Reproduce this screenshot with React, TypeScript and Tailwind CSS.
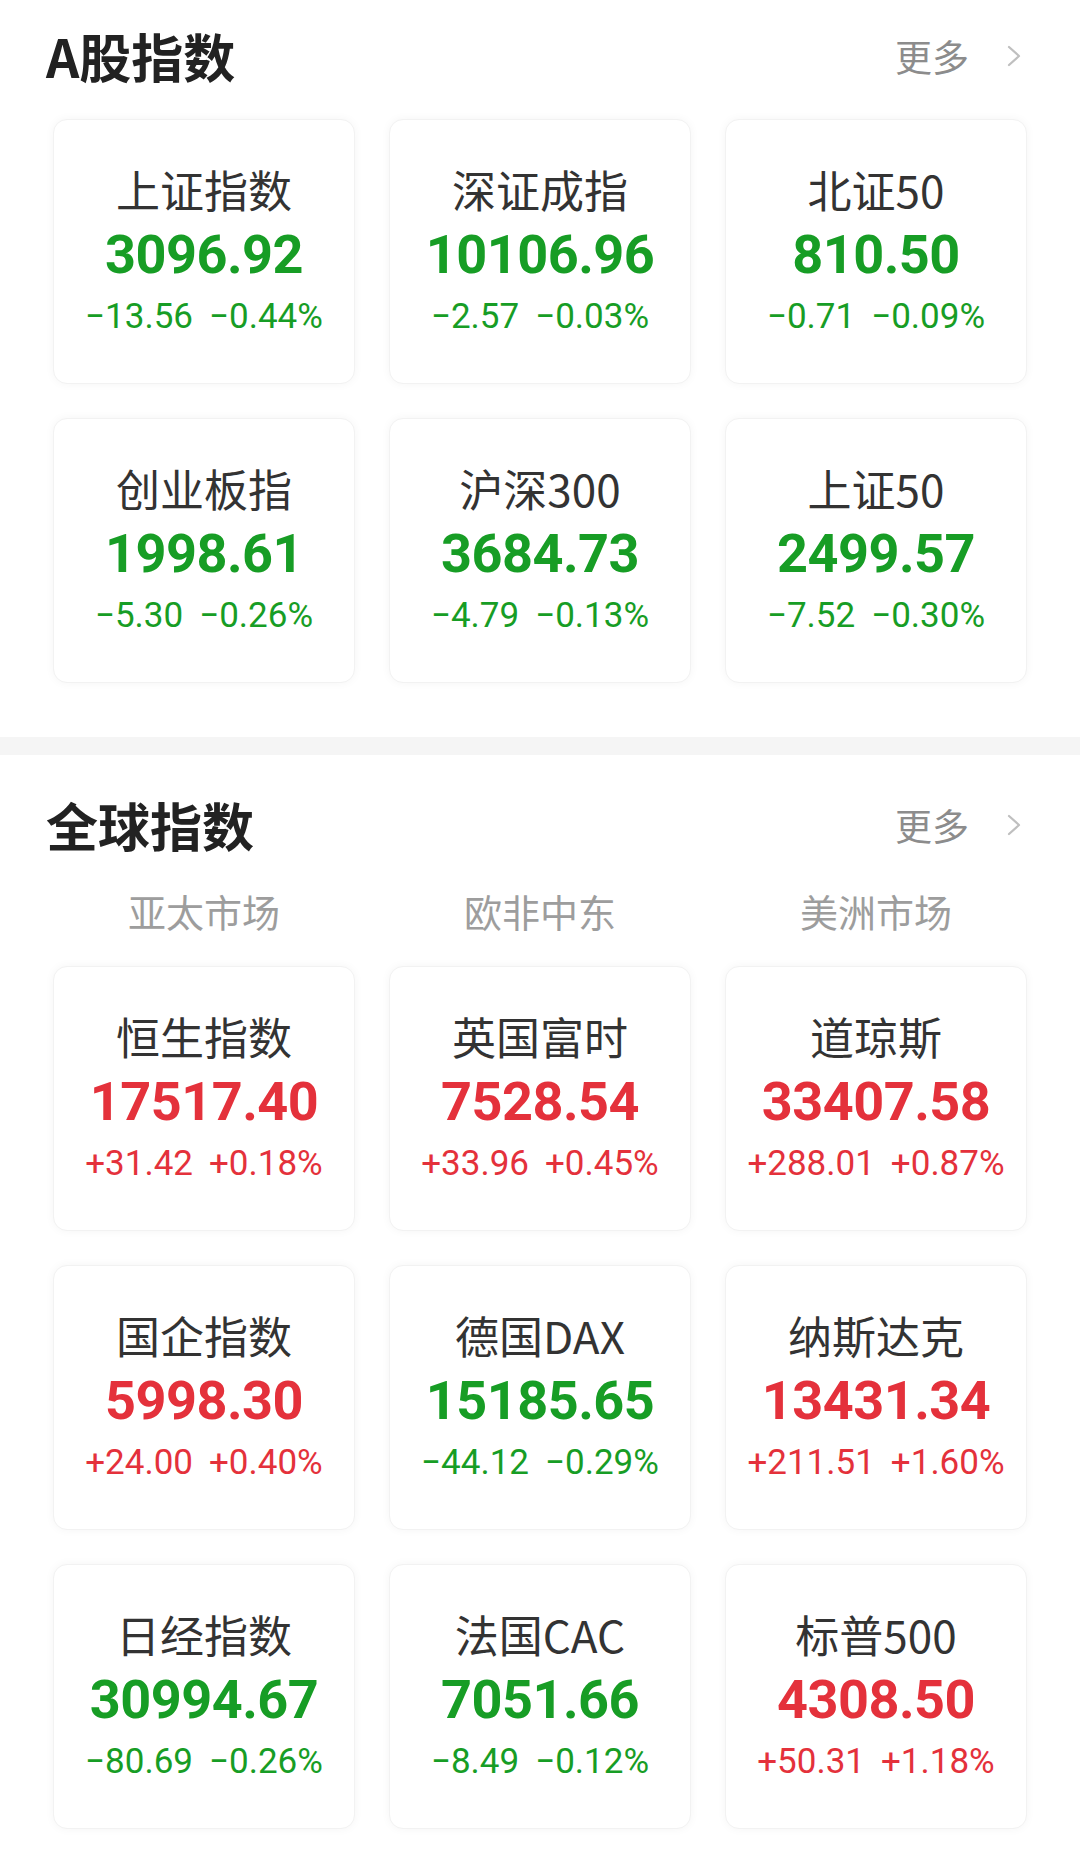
type Quote = {
  name: string;
  price: string;
  change: string;
  percent: string;
};

const aShares: Quote[] = [
  { name: "上证指数", price: "3096.92", change: "-13.56", percent: "-0.44%" },
  { name: "深证成指", price: "10106.96", change: "-2.57", percent: "-0.03%" },
  { name: "北证50", price: "810.50", change: "-0.71", percent: "-0.09%" },
  { name: "创业板指", price: "1998.61", change: "-5.30", percent: "-0.26%" },
  { name: "沪深300", price: "3684.73", change: "-4.79", percent: "-0.13%" },
  { name: "上证50", price: "2499.57", change: "-7.52", percent: "-0.30%" },
];

const globalIndices: Quote[] = [
  { name: "恒生指数", price: "17517.40", change: "+31.42", percent: "+0.18%" },
  { name: "英国富时", price: "7528.54", change: "+33.96", percent: "+0.45%" },
  { name: "道琼斯", price: "33407.58", change: "+288.01", percent: "+0.87%" },
  { name: "国企指数", price: "5998.30", change: "+24.00", percent: "+0.40%" },
  { name: "德国DAX", price: "15185.65", change: "-44.12", percent: "-0.29%" },
  { name: "纳斯达克", price: "13431.34", change: "+211.51", percent: "+1.60%" },
  { name: "日经指数", price: "30994.67", change: "-80.69", percent: "-0.26%" },
  { name: "法国CAC", price: "7051.66", change: "-8.49", percent: "-0.12%" },
  { name: "标普500", price: "4308.50", change: "+50.31", percent: "+1.18%" },
];

const markets = ["亚太市场", "欧非中东", "美洲市场"];

export default function App() {
  return (
    <div className="min-h-[1876px] w-[1080px] bg-white font-['Noto_Sans_CJK_SC',sans-serif]">
      <section className="pb-[54px]">
        <Header title="A股指数" className="h-[112px]" />
        <div className="mt-[7px]">
          <QuoteGrid quotes={aShares} />
        </div>
      </section>

      <div className="h-[18px] bg-[#f5f5f5]" />

      <section className="pb-[46px]">
        <Header title="全球指数" className="mt-[16px] h-[108px]" />
        <div className="grid h-[64px] grid-cols-3 gap-x-[34px] px-[53px]">
          {markets.map((m) => (
            <div
              key={m}
              className="flex items-center justify-center text-[38px] leading-none text-[#9d9d9d]"
            >
              {m}
            </div>
          ))}
        </div>
        <div className="mt-[23px]">
          <QuoteGrid quotes={globalIndices} />
        </div>
      </section>
    </div>
  );
}

function Header({ title, className }: { title: string; className?: string }) {
  return (
    <div
      className={[
        "flex items-center justify-between pl-[46px] pr-[59px]",
        className,
      ].join(" ")}
    >
      <h2 className="text-[52px] font-bold leading-none text-[#222222]">
        {title}
      </h2>
      <div className="flex items-center gap-[38px]">
        <span className="text-[37px] leading-none text-[#8c8c8c]">更多</span>
        <svg width="14" height="22" viewBox="0 0 14 22" fill="none">
          <path
            d="M2 2 L12 11 L2 20"
            stroke="#bfbfbf"
            strokeWidth="2.2"
            strokeLinecap="round"
            strokeLinejoin="round"
          />
        </svg>
      </div>
    </div>
  );
}

function QuoteGrid({ quotes }: { quotes: Quote[] }) {
  return (
    <div className="grid grid-cols-3 gap-x-[34px] gap-y-[34px] px-[53px]">
      {quotes.map((q) => (
        <QuoteCard key={q.name} quote={q} />
      ))}
    </div>
  );
}

// the app uses a real minus sign, wider than the hyphen
const signed = (s: string) => s.replace("-", "\u2212");

function QuoteCard({ quote }: { quote: Quote }) {
  const up = quote.change.startsWith("+");
  const color = up ? "text-[#e4313b]" : "text-[#179d25]";
  return (
    <div className="flex h-[265px] flex-col items-center justify-center rounded-[14px] border border-[#f2f2f2] bg-white shadow-[0_0_10px_rgba(0,0,0,0.045)]">
      <div className="text-[44px] leading-[48px] text-[#333333]">
        {quote.name}
      </div>
      <div
        className={[
          "mt-[12px] font-['Roboto',sans-serif] text-[54px] font-bold leading-[60px] tracking-[-0.5px]",
          color,
        ].join(" ")}
      >
        {quote.price}
      </div>
      <div
        className={[
          "mt-[10px] flex gap-[16px] font-['Roboto',sans-serif] text-[35px] leading-[44px]",
          color,
        ].join(" ")}
      >
        <span>{signed(quote.change)}</span>
        <span>{signed(quote.percent)}</span>
      </div>
    </div>
  );
}
